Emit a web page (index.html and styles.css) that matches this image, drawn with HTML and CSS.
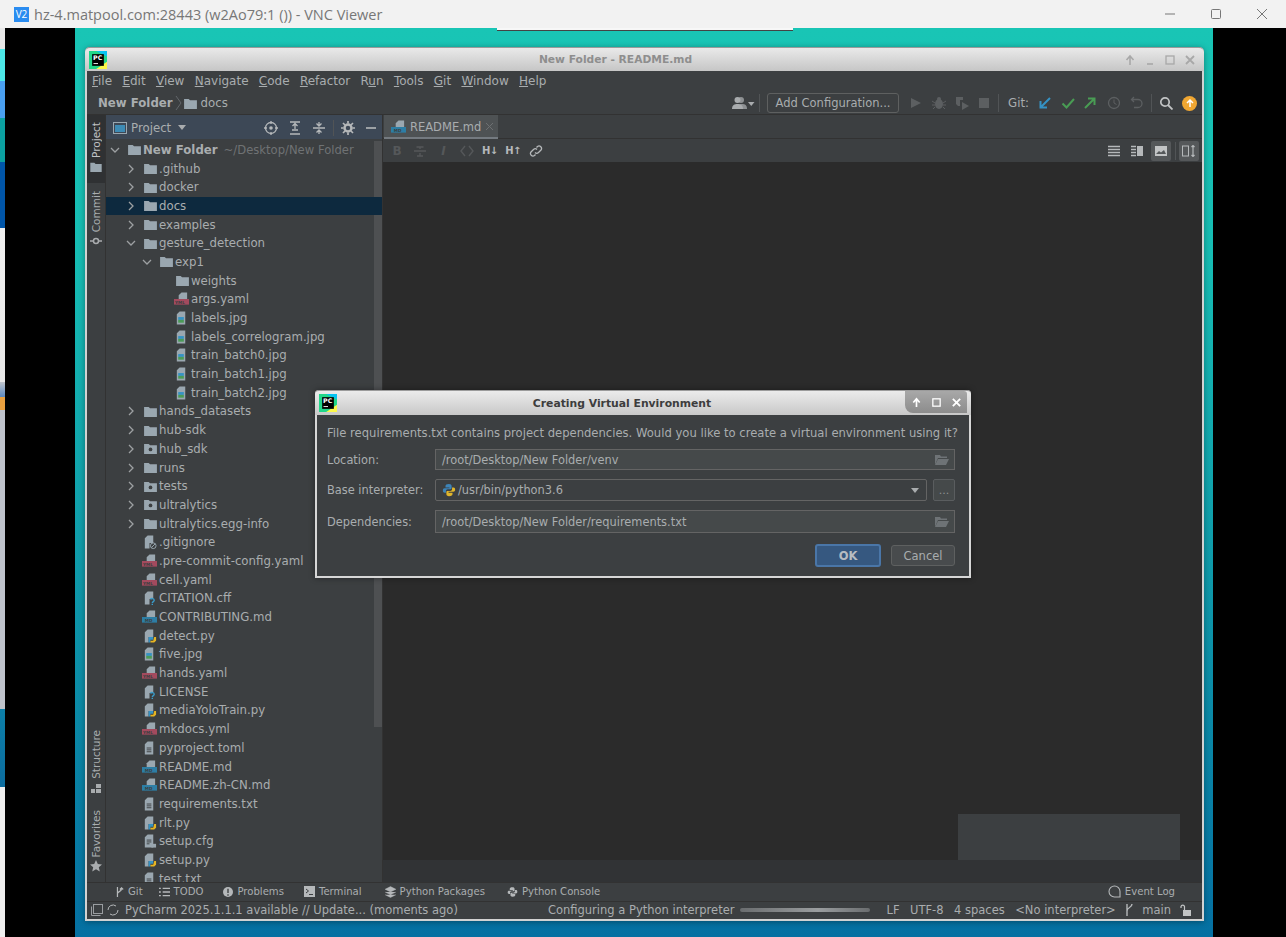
FILE: index.html
```html
<!DOCTYPE html>
<html lang="en">
<head>
    <meta charset="UTF-8">
    <title>hz-4.matpool.com:28443 (w2Ao79:1 ()) - VNC Viewer</title>
    <link rel="stylesheet" href="styles.css">
</head>
<body>
    <svg class="defs" width="0" height="0">
        <defs>
            <symbol id="folder" viewBox="0 0 14 12"><path d="M0 1h5l1.5 1.5H14V12H0z" fill="#9aa7b0"/></symbol>
            <symbol id="folder-dot" viewBox="0 0 14 12"><path d="M0 1h5l1.5 1.5H14V12H0z" fill="#9aa7b0"/><circle cx="7" cy="7" r="2" fill="#3c3f41"/></symbol>
            <symbol id="chev-r" viewBox="0 0 10 10"><path d="M3 1l4 4-4 4" fill="none" stroke="#9da0a2" stroke-width="1.3"/></symbol>
            <symbol id="chev-d" viewBox="0 0 10 10"><path d="M1 3l4 4 4-4" fill="none" stroke="#9da0a2" stroke-width="1.3"/></symbol>
            <symbol id="page" viewBox="0 0 16 16"><path d="M6 1h6v14H3V4z" fill="#9aa7b0"/><path d="M5 8h5M5 10h5M5 12h5" stroke="#3c3f41"/></symbol>
            <symbol id="yml" viewBox="0 0 16 16"><path d="M8 1h6v7H5V4z" fill="#9aa7b0"/><rect y="8" width="16" height="6" fill="#a34a5e"/><text x="1" y="13" class="badge-text">YML</text></symbol>
            <symbol id="md" viewBox="0 0 16 16"><path d="M8 1h6v7H5V4z" fill="#9aa7b0"/><rect y="8" width="16" height="6" fill="#2d7ea5"/><text x="3" y="13" class="badge-text">MD</text></symbol>
            <symbol id="jpg" viewBox="0 0 16 16"><path d="M6 1h6v14H3V4z" fill="#9aa7b0"/><rect x="4.5" y="7" width="6" height="3" fill="#3592c4"/><rect x="4.5" y="10" width="6" height="3" fill="#4b9a57"/></symbol>
            <symbol id="py" viewBox="0 0 16 16"><path d="M6 1h6v8H3V4zM3 9h4v6H3z" fill="#9aa7b0"/><path d="M7 9h5v3H9v3H7z" fill="#3592c4"/><path d="M13 9h2v4l-2 2h-4v-2h3z" fill="#e6b422"/></symbol>
            <symbol id="unknown" viewBox="0 0 16 16"><path d="M6 1h6v8H8v6H3V4z" fill="#9aa7b0"/><path d="M9 9.500c1-1.500 4-1 4 .8 0 1.500-2 1.500-2 3M11 14v1.500" fill="none" stroke="#3a9bc9" stroke-width="1.5"/></symbol>
            <symbol id="ignore" viewBox="0 0 16 16"><path d="M6 1h6v8H8v6H3V4z" fill="#9aa7b0"/><circle cx="12" cy="12" r="3" fill="none" stroke="#9aa7b0"/><path d="M10 14l4-4" stroke="#9aa7b0"/></symbol>
            <symbol id="cfg" viewBox="0 0 16 16"><path d="M6 1h6v14H3V4z" fill="#9aa7b0"/><path d="M5 7h5M5 9h5M5 11h3" stroke="#3c3f41"/><rect x="10" y="11" width="5" height="4" fill="#9aa7b0"/></symbol>
            <symbol id="python" viewBox="0 0 16 16"><path d="M8 1c-3 0-4 1-4 2.500V5h4.500v1H3C1.500 6 1 7 1 8.500S1.500 11 3 11h1.500V9c0-1 1-2 2-2h3c1 0 1.500-.5 1.500-1.500v-2C11 2 10 1 8 1z" fill="#3d84b8"/><path d="M8 15c3 0 4-1 4-2.500V11H7.500v-1H13c1.500 0 2-1 2-2.500S14.500 5 13 5h-1.500v2c0 1-1 2-2 2h-3C5.500 9 5 9.500 5 10.500v2C5 14 6 15 8 15z" fill="#e0b62c"/></symbol>
            <symbol id="pc" viewBox="0 0 20 20">
                <rect width="20" height="20" fill="#21d789"/><path d="M0 0h20v6L8 0z" fill="#07c3f2"/><path d="M20 20H8l12-8z" fill="#fcf84a"/>
                <rect x="3.5" y="3.5" width="13" height="13" fill="#000"/>
                <text x="4.5" y="10" class="pc-text">PC</text><rect x="5" y="13.5" width="5" height="1" fill="#fff"/>
            </symbol>
            <symbol id="open-folder" viewBox="0 0 14 12"><path d="M0 1h5l1 1.500h6V4H3L0 11z" fill="#6e7376"/><path d="M3 5h11l-3 6H0z" fill="#6e7376"/></symbol>
        </defs>
    </svg>

    <header class="vnc-title">
        <span class="vnc-logo">V2</span>
        <span class="vnc-name">hz-4.matpool.com:28443 (w2Ao79:1 ()) - VNC Viewer</span>
        <div class="vnc-controls">
            <svg width="12" height="12" viewBox="0 0 12 12"><path d="M1 6h10" stroke="#777"/></svg>
            <svg width="12" height="12" viewBox="0 0 12 12"><rect x="1.5" y="1.5" width="9" height="9" rx="1" fill="none" stroke="#777"/></svg>
            <svg width="12" height="12" viewBox="0 0 12 12"><path d="M1 1l10 10M11 1L1 11" stroke="#777"/></svg>
        </div>
    </header>

    <main class="viewport">
        <div class="behind-strip"></div>
        <div class="gutter-left"></div>
        <div class="desktop">
            <div class="ide">
                <div class="ide-title">
                    <svg class="pc-logo"><use href="#pc"/></svg>
                    <span class="ide-title-text">New Folder - README.md</span>
                    <div class="wm-buttons">
                        <svg width="12" height="12" viewBox="0 0 12 12"><path d="M6 11V3M2.5 6L6 2l3.5 4" fill="none" stroke="#a8a8a8" stroke-width="1.6"/></svg>
                        <svg width="12" height="12" viewBox="0 0 12 12"><path d="M3 10h6" stroke="#a8a8a8" stroke-width="1.6"/></svg>
                        <svg width="12" height="12" viewBox="0 0 12 12"><rect x="2" y="2" width="8" height="8" fill="none" stroke="#a8a8a8" stroke-width="1.3"/></svg>
                        <svg width="12" height="12" viewBox="0 0 12 12"><path d="M2 2l8 8M10 2l-8 8" stroke="#a8a8a8" stroke-width="1.8"/></svg>
                    </div>
                </div>

                <nav class="menu">
                    <span><u>F</u>ile</span><span><u>E</u>dit</span><span><u>V</u>iew</span><span><u>N</u>avigate</span><span><u>C</u>ode</span><span><u>R</u>efactor</span><span>R<u>u</u>n</span><span><u>T</u>ools</span><span><u>G</u>it</span><span><u>W</u>indow</span><span><u>H</u>elp</span>
                </nav>

                <div class="navbar">
                    <div class="crumbs">
                        <b>New Folder</b>
                        <svg class="crumb-sep" width="7" height="16" viewBox="0 0 7 16"><path d="M1 1l5 7-5 7" fill="none" stroke="#62666a"/></svg>
                        <svg class="i-folder"><use href="#folder"/></svg>
                        <span>docs</span>
                    </div>
                    <div class="run-tools">
                        <svg class="tool tool-user" width="24" height="14" viewBox="0 0 24 14"><circle cx="10" cy="4" r="3" fill="#8e9193"/><path d="M6 13c0-4 2-5 5-5s5 1 5 5z" fill="#8e9193"/><circle cx="6.500" cy="4" r="3" fill="#a9acae"/><path d="M1 13c0-4 2.500-5 5.500-5s5.500 1 5.500 5z" fill="#a9acae"/><path d="M17 6h6.500l-3.250 4z" fill="#a9acae"/></svg>
                        <span class="vsep"></span>
                        <button class="add-config">Add Configuration...</button>
                        <svg class="tool tool-play" width="12" height="12" viewBox="0 0 12 12"><path d="M1 1l10 5-10 5z" fill="#5c5f61"/></svg>
                        <svg class="tool tool-bug" width="14" height="14" viewBox="0 0 14 14"><ellipse cx="7" cy="8" rx="4" ry="5" fill="#5c5f61"/><circle cx="7" cy="3" r="2" fill="#5c5f61"/><path d="M0 5l3 2M14 5l-3 2M0 9h3M14 9h-3M1 13l2-2M13 13l-2-2" stroke="#5c5f61"/></svg>
                        <svg class="tool tool-cover" width="14" height="14" viewBox="0 0 14 14"><path d="M1 1h7v3H5v6H3L1 8z" fill="#5c5f61"/><path d="M7 6l7 4-7 4z" fill="#5c5f61"/></svg>
                        <svg class="tool tool-stop" width="12" height="12" viewBox="0 0 12 12"><rect x="1" y="1" width="10" height="10" fill="#5c5f61"/></svg>
                        <span class="vsep sep-git"></span>
                        <span class="git-label">Git:</span>
                        <svg class="tool tool-pull" width="14" height="14" viewBox="0 0 14 14"><path d="M12 2L3 11M2.500 5v6.500H9" fill="none" stroke="#3592c4" stroke-width="2"/></svg>
                        <svg class="tool tool-check" width="14" height="14" viewBox="0 0 14 14"><path d="M1.500 7.500L5.500 11.500 13 3" fill="none" stroke="#499c54" stroke-width="2"/></svg>
                        <svg class="tool tool-push" width="14" height="14" viewBox="0 0 14 14"><path d="M2 12L11 3M5 2.500h6.500V9" fill="none" stroke="#499c54" stroke-width="2"/></svg>
                        <svg class="tool tool-clock" width="14" height="14" viewBox="0 0 14 14"><circle cx="7" cy="7" r="5.500" fill="none" stroke="#5c5f61" stroke-width="1.3"/><path d="M7 3.500V7l2.500 1.500" fill="none" stroke="#5c5f61"/></svg>
                        <svg class="tool tool-undo" width="14" height="14" viewBox="0 0 14 14"><path d="M4 1L1.500 3.500 4 6M2 3.500h6a3.800 3.800 0 0 1 0 8H4" fill="none" stroke="#5c5f61" stroke-width="1.3"/></svg>
                        <span class="vsep sep-search"></span>
                        <svg class="tool tool-search" width="14" height="14" viewBox="0 0 14 14"><circle cx="6" cy="6" r="4.200" fill="none" stroke="#c2c4c5" stroke-width="1.7"/><path d="M9 9l4.500 4.500" stroke="#c2c4c5" stroke-width="1.8"/></svg>
                        <span class="update-dot"><svg width="10" height="10" viewBox="0 0 10 10"><path d="M5 9V3M2 5l3-3 3 3" fill="none" stroke="#fff" stroke-width="1.5"/></svg></span>
                    </div>
                </div>

                <div class="workspace">
                    <aside class="stripe">
                        <div class="stripe-tab active">
                            <svg width="12" height="10" viewBox="0 0 14 12"><use href="#folder"/></svg>
                            <span class="v-text">Project</span>
                        </div>
                        <div class="stripe-tab">
                            <svg width="12" height="12" viewBox="0 0 12 12"><circle cx="6" cy="6" r="2.500" fill="none" stroke="#a9acae" stroke-width="1.5"/><path d="M0 6h3M9 6h3" stroke="#a9acae" stroke-width="1.5"/></svg>
                            <span class="v-text">Commit</span>
                        </div>
                        <div class="stripe-bottom">
                            <div class="stripe-tab tab-structure">
                                <svg width="12" height="12" viewBox="0 0 12 12"><rect x="1" y="7" width="4" height="4" fill="#a9acae"/><rect x="6" y="2" width="5" height="4" fill="#a9acae"/><rect x="6" y="7" width="5" height="4" fill="#a9acae"/></svg>
                                <span class="v-text">Structure</span>
                            </div>
                            <div class="stripe-tab tab-favorites">
                                <svg width="12" height="12" viewBox="0 0 12 12"><path d="M6 0l1.800 4 4.200.4-3.200 2.800 1 4.300L6 9.300 2.200 11.500l1-4.300L0 4.400 4.200 4z" fill="#a9acae"/></svg>
                                <span class="v-text">Favorites</span>
                            </div>
                        </div>
                    </aside>

                    <section class="project">
                        <div class="project-head">
                            <svg class="i-window" width="14" height="12" viewBox="0 0 14 12"><rect x=".5" y=".5" width="13" height="11" fill="none" stroke="#9aa7b0"/><rect x="2" y="3" width="10" height="7" fill="#3d8bb5"/></svg>
                            <span class="project-title">Project</span>
                            <svg class="head-caret" width="8" height="5" viewBox="0 0 8 5"><path d="M0 0h8L4 5z" fill="#a9acae"/></svg>
                            <div class="head-tools">
                                <svg width="14" height="14" viewBox="0 0 14 14"><circle cx="7" cy="7" r="5.500" fill="none" stroke="#b5b8ba" stroke-width="1.3"/><circle cx="7" cy="7" r="1.800" fill="#b5b8ba"/><path d="M7 0v3M7 11v3M0 7h3M11 7h3" stroke="#b5b8ba" stroke-width="1.3"/></svg>
                                <svg width="14" height="14" viewBox="0 0 14 14"><path d="M2 1h10M2 13h10M4 9h6M7 3v5M4.500 5L7 2.500 9.500 5" fill="none" stroke="#b5b8ba" stroke-width="1.3"/></svg>
                                <svg width="14" height="14" viewBox="0 0 14 14"><path d="M1 7h12M7 1v3.500M7 9.500V13M4.500 2.500L7 5l2.500-2.500M4.500 11.500L7 9l2.500 2.500" fill="none" stroke="#b5b8ba" stroke-width="1.3"/></svg>
                                <span class="vsep head-sep"></span>
                                <svg width="14" height="14" viewBox="0 0 14 14"><circle cx="7" cy="7" r="3.500" fill="none" stroke="#b5b8ba" stroke-width="2.5"/><path d="M7 0v2.500M7 11.500V14M0 7h2.500M11.500 7H14M2 2l2 2M10 10l2 2M12 2l-2 2M4 10l-2 2" stroke="#b5b8ba" stroke-width="1.7"/></svg>
                                <svg width="12" height="14" viewBox="0 0 12 14"><path d="M1 7h10" stroke="#b5b8ba" stroke-width="1.6"/></svg>
                            </div>
                        </div>
                        <div class="tree">
                            <div class="scrollbar"></div>
                            <div class="row d0"><svg class="chev"><use href="#chev-d"/></svg><svg class="ico"><use href="#folder"/></svg><b>New Folder</b><span class="path">~/Desktop/New Folder</span></div>
                            <div class="row d1"><svg class="chev"><use href="#chev-r"/></svg><svg class="ico"><use href="#folder"/></svg>.github</div>
                            <div class="row d1"><svg class="chev"><use href="#chev-r"/></svg><svg class="ico"><use href="#folder"/></svg>docker</div>
                            <div class="row d1 selected"><svg class="chev"><use href="#chev-r"/></svg><svg class="ico"><use href="#folder"/></svg>docs</div>
                            <div class="row d1"><svg class="chev"><use href="#chev-r"/></svg><svg class="ico"><use href="#folder"/></svg>examples</div>
                            <div class="row d1"><svg class="chev"><use href="#chev-d"/></svg><svg class="ico"><use href="#folder"/></svg>gesture_detection</div>
                            <div class="row d2"><svg class="chev"><use href="#chev-d"/></svg><svg class="ico"><use href="#folder"/></svg>exp1</div>
                            <div class="row d3"><span class="chev"></span><svg class="ico"><use href="#folder"/></svg>weights</div>
                            <div class="row d3"><span class="chev"></span><svg class="ico file"><use href="#yml"/></svg>args.yaml</div>
                            <div class="row d3"><span class="chev"></span><svg class="ico file"><use href="#jpg"/></svg>labels.jpg</div>
                            <div class="row d3"><span class="chev"></span><svg class="ico file"><use href="#jpg"/></svg>labels_correlogram.jpg</div>
                            <div class="row d3"><span class="chev"></span><svg class="ico file"><use href="#jpg"/></svg>train_batch0.jpg</div>
                            <div class="row d3"><span class="chev"></span><svg class="ico file"><use href="#jpg"/></svg>train_batch1.jpg</div>
                            <div class="row d3"><span class="chev"></span><svg class="ico file"><use href="#jpg"/></svg>train_batch2.jpg</div>
                            <div class="row d1"><svg class="chev"><use href="#chev-r"/></svg><svg class="ico"><use href="#folder"/></svg>hands_datasets</div>
                            <div class="row d1"><svg class="chev"><use href="#chev-r"/></svg><svg class="ico"><use href="#folder"/></svg>hub-sdk</div>
                            <div class="row d1"><svg class="chev"><use href="#chev-r"/></svg><svg class="ico"><use href="#folder-dot"/></svg>hub_sdk</div>
                            <div class="row d1"><svg class="chev"><use href="#chev-r"/></svg><svg class="ico"><use href="#folder"/></svg>runs</div>
                            <div class="row d1"><svg class="chev"><use href="#chev-r"/></svg><svg class="ico"><use href="#folder-dot"/></svg>tests</div>
                            <div class="row d1"><svg class="chev"><use href="#chev-r"/></svg><svg class="ico"><use href="#folder-dot"/></svg>ultralytics</div>
                            <div class="row d1"><svg class="chev"><use href="#chev-r"/></svg><svg class="ico"><use href="#folder"/></svg>ultralytics.egg-info</div>
                            <div class="row d1"><span class="chev"></span><svg class="ico file"><use href="#ignore"/></svg>.gitignore</div>
                            <div class="row d1"><span class="chev"></span><svg class="ico file"><use href="#yml"/></svg>.pre-commit-config.yaml</div>
                            <div class="row d1"><span class="chev"></span><svg class="ico file"><use href="#yml"/></svg>cell.yaml</div>
                            <div class="row d1"><span class="chev"></span><svg class="ico file"><use href="#unknown"/></svg>CITATION.cff</div>
                            <div class="row d1"><span class="chev"></span><svg class="ico file"><use href="#md"/></svg>CONTRIBUTING.md</div>
                            <div class="row d1"><span class="chev"></span><svg class="ico file"><use href="#py"/></svg>detect.py</div>
                            <div class="row d1"><span class="chev"></span><svg class="ico file"><use href="#jpg"/></svg>five.jpg</div>
                            <div class="row d1"><span class="chev"></span><svg class="ico file"><use href="#yml"/></svg>hands.yaml</div>
                            <div class="row d1"><span class="chev"></span><svg class="ico file"><use href="#unknown"/></svg>LICENSE</div>
                            <div class="row d1"><span class="chev"></span><svg class="ico file"><use href="#py"/></svg>mediaYoloTrain.py</div>
                            <div class="row d1"><span class="chev"></span><svg class="ico file"><use href="#yml"/></svg>mkdocs.yml</div>
                            <div class="row d1"><span class="chev"></span><svg class="ico file"><use href="#page"/></svg>pyproject.toml</div>
                            <div class="row d1"><span class="chev"></span><svg class="ico file"><use href="#md"/></svg>README.md</div>
                            <div class="row d1"><span class="chev"></span><svg class="ico file"><use href="#md"/></svg>README.zh-CN.md</div>
                            <div class="row d1"><span class="chev"></span><svg class="ico file"><use href="#page"/></svg>requirements.txt</div>
                            <div class="row d1"><span class="chev"></span><svg class="ico file"><use href="#py"/></svg>rlt.py</div>
                            <div class="row d1"><span class="chev"></span><svg class="ico file"><use href="#cfg"/></svg>setup.cfg</div>
                            <div class="row d1"><span class="chev"></span><svg class="ico file"><use href="#py"/></svg>setup.py</div>
                            <div class="row d1"><span class="chev"></span><svg class="ico file"><use href="#page"/></svg>test.txt</div>
                        </div>
                    </section>

                    <section class="editor">
                        <div class="tabs">
                            <div class="tab">
                                <svg class="ico-tab"><use href="#md"/></svg>
                                <span>README.md</span>
                                <svg width="9" height="9" viewBox="0 0 9 9"><path d="M1 1l7 7M8 1L1 8" stroke="#6d7072"/></svg>
                            </div>
                        </div>
                        <div class="md-bar">
                            <span class="md-btn md-off md-bold">B</span>
                            <svg class="md-icon" width="14" height="14" viewBox="0 0 14 14"><path d="M1 7h12M3.500 3h7M7 3v2M7 9v3M4 12h6" fill="none" stroke="#55585a" stroke-width="1.4"/></svg>
                            <span class="md-btn md-off md-ital">I</span>
                            <svg class="md-icon" width="14" height="14" viewBox="0 0 14 14"><path d="M5 2L1 7l4 5M9 2l4 5-4 5" fill="none" stroke="#55585a" stroke-width="1.4"/></svg>
                            <span class="md-btn md-h">H↓</span>
                            <span class="md-btn md-h">H↑</span>
                            <svg class="md-icon" width="14" height="14" viewBox="0 0 14 14"><path d="M6 8.500a2.500 2.500 0 0 0 3.500 0l2.500-2.500a2.500 2.500 0 0 0-3.500-3.500L7.500 3.500M8 5.500a2.500 2.500 0 0 0-3.500 0L2 8a2.500 2.500 0 0 0 3.500 3.500l1-1" fill="none" stroke="#b5b8ba" stroke-width="1.3"/></svg>
                            <div class="md-view">
                                <svg width="12" height="12" viewBox="0 0 12 12"><path d="M0 1.500h12M0 4.500h12M0 7.500h12M0 10.500h12" stroke="#b5b8ba" stroke-width="1.3"/></svg>
                                <svg width="12" height="12" viewBox="0 0 12 12"><path d="M0 1.500h5M0 4.500h5M0 7.500h5M0 10.500h5" stroke="#b5b8ba" stroke-width="1.3"/><rect x="6" y="1" width="6" height="10" fill="#b5b8ba"/></svg>
                                <span class="view-on view-img"><svg width="12" height="10" viewBox="0 0 12 10"><rect width="12" height="10" fill="#c2c4c5"/><path d="M1 8l3-3 2 1.500L9 4l2 4z" fill="#55585a"/></svg></span>
                                <span class="vsep view-sep"></span>
                                <span class="view-on"><svg width="14" height="12" viewBox="0 0 14 12"><rect x=".5" y="1" width="6" height="10" fill="none" stroke="#b5b8ba"/><path d="M11 0v12M9.500 2L11 .5 12.500 2M9.500 10l1.500 1.500 1.500-1.500" fill="none" stroke="#b5b8ba" stroke-width="1.2"/></svg></span>
                            </div>
                        </div>
                        <div class="editor-body">
                            <div class="ghost-box"></div>
                        </div>
                        <div class="editor-foot"></div>
                    </section>
                </div>

                <div class="tool-bar">
                    <span class="tw tw-git"><svg width="9" height="12" viewBox="0 0 11 12"><path d="M3 0v12M3 8c0-3 5-2 5-6M6 3l2-2 2 2" fill="none" stroke="#b5b8ba" stroke-width="1.5"/></svg>Git</span>
                    <span class="tw tw-todo"><svg width="11" height="10" viewBox="0 0 12 10"><path d="M0 1h2M4 1h8M0 5h2M4 5h8M0 9h2M4 9h8" stroke="#b5b8ba" stroke-width="1.4"/></svg>TODO</span>
                    <span class="tw tw-problems"><svg width="10" height="10" viewBox="0 0 11 11"><circle cx="5.500" cy="5.500" r="5.500" fill="#b5b8ba"/><path d="M5.500 2v4.500M5.500 8v1.500" stroke="#3c3f41" stroke-width="1.5"/></svg>Problems</span>
                    <span class="tw tw-terminal"><svg width="11" height="11" viewBox="0 0 11 11"><rect width="11" height="11" fill="#b5b8ba"/><path d="M2 3l2.500 2L2 7M5 8.500h4" fill="none" stroke="#3c3f41"/></svg>Terminal</span>
                    <span class="tw tw-packages"><svg width="11" height="12" viewBox="0 0 12 12"><path d="M6 0l6 3-6 3-6-3zM0 6l6 3 6-3M0 9l6 3 6-3" fill="#b5b8ba" stroke="#b5b8ba" stroke-width=".4"/></svg>Python Packages</span>
                    <span class="tw tw-console"><svg width="11" height="12" viewBox="0 0 16 16"><path d="M8 1c-3 0-4 1-4 2.500V5h4.500v1H3C1.500 6 1 7 1 8.500S1.500 11 3 11h1.500V9c0-1 1-2 2-2h3c1 0 1.500-.5 1.500-1.500v-2C11 2 10 1 8 1zM8 15c3 0 4-1 4-2.500V11H7.500v-1H13c1.500 0 2-1 2-2.500S14.500 5 13 5h-1.500v2c0 1-1 2-2 2h-3C5.500 9 5 9.500 5 10.500v2C5 14 6 15 8 15z" fill="#b5b8ba"/></svg>Python Console</span>
                    <span class="tw tw-log"><svg width="13" height="13" viewBox="0 0 13 13"><path d="M12 12H6.500a5.500 5.500 0 1 1 5.500-5.500z" fill="none" stroke="#b5b8ba" stroke-width="1.1"/></svg>Event Log</span>
                </div>

                <footer class="status">
                    <svg class="st-box" width="12" height="12" viewBox="0 0 12 12"><rect x="2.500" y=".5" width="9" height="9" fill="none" stroke="#9a9da0"/><path d="M.5 2.500v9h9" fill="none" stroke="#9a9da0"/></svg>
                    <svg class="st-spin" width="12" height="12" viewBox="0 0 12 12"><path d="M1 6a5 5 0 0 1 8-4M11 6a5 5 0 0 1-8 4" fill="none" stroke="#b5b8ba"/></svg>
                    <span>PyCharm 2025.1.1.1 available // Update... (moments ago)</span>
                    <span class="st-task">Configuring a Python interpreter</span>
                    <span class="progress"></span>
                    <span class="st-lf">LF</span>
                    <span class="st-item">UTF-8</span>
                    <span class="st-item">4 spaces</span>
                    <span class="st-item">&lt;No interpreter&gt;</span>
                    <span class="st-branch"><svg width="9" height="14" viewBox="0 0 9 14"><path d="M3 1v12M8 1c0 4-5 3-5 7" fill="none" stroke="#b5b8ba" stroke-width="1.4"/></svg>main</span>
                    <svg class="st-lock" width="11" height="12" viewBox="0 0 11 12"><rect x="3" y="6" width="8" height="6" fill="#c2c4c5"/><path d="M1 4V2.500a1.800 1.800 0 0 1 3.500 0V6" fill="none" stroke="#c2c4c5" stroke-width="1.2"/></svg>
                </footer>
            </div>

            <div class="dialog">
                <div class="dialog-title">
                    <svg class="pc-logo"><use href="#pc"/></svg>
                    <span class="dialog-title-text">Creating Virtual Environment</span>
                    <div class="dialog-wm">
                        <svg width="11" height="11" viewBox="0 0 12 12"><path d="M6 11V3M2.500 6L6 2l3.500 4" fill="none" stroke="#fff" stroke-width="1.8"/></svg>
                        <svg width="11" height="11" viewBox="0 0 12 12"><rect x="2" y="2" width="8" height="8" fill="none" stroke="#fff" stroke-width="1.4"/></svg>
                        <svg width="11" height="11" viewBox="0 0 12 12"><path d="M2 2l8 8M10 2l-8 8" stroke="#fff" stroke-width="2"/></svg>
                    </div>
                </div>
                <div class="dialog-body">
                    <p class="dialog-msg">File requirements.txt contains project dependencies. Would you like to create a virtual environment using it?</p>
                    <div class="form">
                        <label>Location:</label>
                        <div class="field field-location"><span>/root/Desktop/New Folder/venv</span><svg width="14" height="12"><use href="#open-folder"/></svg></div>
                        <label>Base interpreter:</label>
                        <div class="combo-row">
                            <div class="field combo"><svg class="py-ico" width="14" height="14"><use href="#python"/></svg><span>/usr/bin/python3.6</span><svg class="combo-caret" width="8" height="5" viewBox="0 0 8 5"><path d="M0 0h8L4 5z" fill="#a9acae"/></svg></div>
                            <button class="dots">...</button>
                        </div>
                        <label>Dependencies:</label>
                        <div class="field field-deps"><span>/root/Desktop/New Folder/requirements.txt</span><svg width="14" height="12"><use href="#open-folder"/></svg></div>
                    </div>
                    <div class="dialog-actions">
                        <button class="btn btn-ok">OK</button>
                        <button class="btn">Cancel</button>
                    </div>
                </div>
            </div>
        </div>
        <div class="gutter-right"></div>
    </main>
    <div class="sliver"></div>
</body>
</html>
```

FILE: styles.css
```css
* {
    box-sizing: border-box;
}

html, body {
    margin: 0;
    height: 937px;
    overflow: hidden;
}

body {
    background: #000;
    font-family: "DejaVu Sans", sans-serif;
    font-size: 11.75px;
    color: #a9adaf;
}

.defs {
    position: absolute;
}

.pc-text {
    font: bold 7px "DejaVu Sans", sans-serif;
    fill: #fff;
}

.badge-text {
    font: bold 4.5px "DejaVu Sans", sans-serif;
    fill: #3c3f41;
}

/* vnc viewer chrome */
.vnc-title {
    height: 28px;
    background: #f2f2f2;
    display: flex;
    align-items: center;
    padding-left: 14px;
    font-family: "Open Sans", sans-serif;
    font-size: 14px;
    color: #777;
}

.vnc-logo {
    width: 15px;
    height: 15px;
    background: #2a8cf0;
    color: #fff;
    font-size: 10px;
    line-height: 15px;
    text-align: center;
    margin-right: 5px;
}

.vnc-name {
    font-size: 14.5px;
}

.vnc-controls {
    margin-left: auto;
    display: flex;
    gap: 34px;
    padding-right: 18px;
}

.viewport {
    display: flex;
    height: 909px;
}

.behind-strip {
    width: 5px;
    background: linear-gradient(#e8e8e8 0, #e8e8e8 21px, #4de8e8 21px, #4de8e8 53px, #4a9ff0 53px, #4a9ff0 90px, #0ba0a0 90px, #0ba0a0 134px, #0055a8 134px, #0055a8 200px, #f0f0f0 200px, #e8e8e8 354px, #c0c4cc 354px, #5a88c0 369px, #e8a040 369px, #e8a040 382px, #bfc3cb 382px, #bfc3cb 681px, #0c7fa8 681px, #0c6c9e 759px, #efefef 759px);
}

.gutter-left {
    width: 70px;
}

.gutter-right {
    width: 73px;
}

.desktop {
    position: relative;
    width: 1138px;
    background: linear-gradient(#19c5b5 0, #17bdb4 25%, #0f9aaa 60%, #0570a2 100%);
    padding: 19px 0 0 10px;
}

.sliver {
    position: absolute;
    left: 497px;
    top: 28px;
    width: 296px;
    height: 3px;
    background: #f7f7f7;
    border-bottom: 1px solid #444;
}

/* ide window */
.ide {
    width: 1119px;
    height: 874px;
    background: #3c3f41;
    border: 2px solid #d2d2d2;
    border-top: 0;
    border-radius: 5px 5px 0 0;
    display: flex;
    flex-direction: column;
    box-shadow: 0 1px 6px rgba(0, 0, 0, .35);
}

.ide-title {
    height: 24px;
    flex: none;
    margin: 0 -2px;
    background: linear-gradient(#e9e9e9, #c6c6c6);
    border-top: 1px solid #9b9b9b;
    border-radius: 5px 5px 0 0;
    display: flex;
    align-items: center;
    position: relative;
    padding-left: 4px;
}

.pc-logo {
    width: 18px;
    height: 18px;
}

.ide-title-text {
    position: absolute;
    left: 0;
    right: 58px;
    text-align: center;
    font-size: 10.7px;
    font-weight: bold;
    color: #8e8e8e;
}

.wm-buttons {
    margin-left: auto;
    display: flex;
    gap: 8px;
    padding-right: 8px;
}

.menu {
    height: 21px;
    flex: none;
    display: flex;
    align-items: center;
    gap: 10.3px;
    padding-left: 5px;
    font-size: 12px;
    padding-bottom: 1px;
}

.navbar {
    height: 23px;
    flex: none;
    display: flex;
    align-items: center;
    padding-left: 11px;
    padding-right: 5px;
    border-bottom: 1px solid #323232;
}

.crumbs {
    display: flex;
    align-items: center;
}

.crumb-sep {
    margin: 0 2px;
}

.i-folder {
    width: 13px;
    height: 11px;
    margin-right: 4px;
}

.run-tools {
    margin-left: auto;
    display: flex;
    align-items: center;
}

.vsep {
    display: block;
    width: 1px;
    height: 18px;
    background: #515456;
    flex: none;
}

.tool-user {
    margin-right: 4px;
}

.add-config {
    height: 20px;
    width: 132px;
    margin-left: 7px;
    margin-right: 11px;
    background: #3c3f41;
    border: 1px solid #5e6060;
    border-radius: 3px;
    color: #a9adaf;
    font: 11.5px "DejaVu Sans", sans-serif;
    padding: 0;
}

.tool-play { margin-right: 10px; }
.tool-bug { margin-right: 9px; }
.tool-cover { margin-right: 9px; }
.tool-stop { margin-right: 8px; }
.sep-git { margin-right: 9px; }
.git-label { margin-right: 9px; }
.tool-pull { margin-right: 9px; }
.tool-check { margin-right: 8px; }
.tool-push { margin-right: 10px; }
.tool-clock { margin-right: 9px; }
.tool-undo { margin-right: 7px; }
.sep-search { margin-right: 7px; }
.tool-search { margin-right: 9px; }

.update-dot {
    width: 15px;
    height: 15px;
    border-radius: 50%;
    background: #f0a732;
    display: flex;
    align-items: center;
    justify-content: center;
}

.workspace {
    flex: 1;
    display: flex;
    min-height: 0;
}

/* left stripe */
.stripe {
    width: 19px;
    flex: none;
    display: flex;
    flex-direction: column;
    border-right: 1px solid #323232;
}

.stripe-tab {
    display: flex;
    flex-direction: column-reverse;
    align-items: center;
    gap: 3px;
    padding: 8px 0;
    font-size: 10.5px;
}

.stripe-tab svg {
    flex: none;
}

.stripe-tab.active {
    background: #2f3133;
    color: #c0c3c5;
    height: 68px;
    padding: 0 0 11px;
    gap: 4px;
}

.v-text {
    writing-mode: vertical-rl;
    transform: rotate(180deg);
}

.stripe-bottom {
    margin-top: auto;
}

.tab-structure {
    padding: 0 0 9px;
}

.tab-favorites {
    padding: 7px 0 10px;
}

/* project tree */
.project {
    width: 277px;
    flex: none;
    display: flex;
    flex-direction: column;
    border-right: 1px solid #323232;
}

.project-head {
    height: 24px;
    flex: none;
    background: #3d4856;
    display: flex;
    align-items: center;
    padding: 1px 0 0 7px;
}

.project-title {
    margin-left: 4px;
}

.head-caret {
    margin-left: 7px;
}

.head-tools {
    margin-left: auto;
    display: flex;
    align-items: center;
    gap: 10px;
    padding-right: 5px;
}

.head-sep {
    height: 16px;
    margin: 0 -3px;
}

.tree {
    flex: 1;
    position: relative;
    overflow: hidden;
    padding-top: 1.5px;
    min-height: 0;
}

.scrollbar {
    position: absolute;
    right: 0;
    top: 2px;
    width: 8px;
    height: 586px;
    background: #4e5052;
}

.row {
    height: 18.7px;
    display: flex;
    align-items: center;
    white-space: nowrap;
    position: relative;
}

.row.selected {
    background: #0d293e;
}

.d0 { padding-left: 1px; }
.d1 { padding-left: 17px; }
.d2 { padding-left: 33px; }
.d3 { padding-left: 49px; }

.chev {
    width: 16px;
    height: 10px;
    flex: none;
}

.ico {
    width: 20px;
    height: 11px;
    flex: none;
    padding: 0 2px 0 5px;
}

.ico.file {
    height: 16px;
    padding: 0 2px 0 3px;
}

.path {
    margin-left: 6px;
    color: #6f7274;
    font-size: 11.6px;
}

/* editor side */
.editor {
    flex: 1;
    display: flex;
    flex-direction: column;
    min-width: 0;
}

.tabs {
    height: 24px;
    flex: none;
    display: flex;
    border-bottom: 1px solid #323232;
}

.tab {
    width: 114px;
    margin-left: 1px;
    background: #4e5254;
    border-bottom: 2px solid #747a80;
    height: 24px;
    display: flex;
    align-items: center;
    gap: 4px;
    padding: 1px 0 0 7px;
    font-size: 11.5px;
}

.ico-tab {
    width: 15px;
    height: 16px;
}

.md-bar {
    height: 23px;
    flex: none;
    display: flex;
    align-items: center;
    padding-left: 2.5px;
}

.md-btn {
    width: 23.2px;
    text-align: center;
    font-size: 12px;
    font-weight: bold;
}

.md-off {
    color: #55585a;
}

.md-ital {
    font-style: italic;
}

.md-h {
    color: #b5b8ba;
    font-size: 10px;
    white-space: nowrap;
    letter-spacing: -.5px;
}

.md-icon {
    margin: 0 4.6px;
}

.md-view {
    margin-left: auto;
    display: flex;
    align-items: center;
    gap: 11px;
    padding-right: 3px;
}

.view-on {
    width: 20px;
    height: 20px;
    background: #55585a;
    border-radius: 2px;
    display: flex;
    align-items: center;
    justify-content: center;
}

.view-img {
    margin-left: -3px;
}

.view-sep {
    margin: 0 -8px 0 -7px;
    height: 18px;
}

.editor-body {
    flex: 1;
    background: #2b2b2b;
    position: relative;
    min-height: 0;
}

.ghost-box {
    position: absolute;
    right: 22px;
    bottom: 0;
    width: 222px;
    height: 46px;
    background: #3c3f41;
}

.editor-foot {
    height: 22px;
    flex: none;
    background: #313335;
}

/* bottom bars */
.tool-bar {
    height: 19px;
    flex: none;
    display: flex;
    align-items: center;
    font-size: 10.1px;
    border-top: 1px solid #323232;
    padding: 0 0 1px 28px;
}

.tw {
    display: flex;
    align-items: center;
    gap: 4px;
}

.tw-todo { margin-left: 16px; }
.tw-problems { margin-left: 20px; }
.tw-terminal { margin-left: 20px; }
.tw-packages { margin-left: 23px; }
.tw-console { margin-left: 22px; }
.tw-log { margin-left: auto; margin-right: 27px; }

.status {
    height: 18px;
    flex: none;
    display: flex;
    align-items: center;
    border-top: 1px solid #323232;
    padding: 0 0 1px 4px;
    font-size: 11.5px;
}

.st-box {
    margin-right: 4px;
}

.st-spin {
    margin-right: 6px;
}

.st-task {
    margin-left: auto;
}

.progress {
    width: 130px;
    height: 4px;
    border-radius: 2px;
    background: linear-gradient(90deg, #6a6d6f, #9a9d9f 60%, #6a6d6f);
    margin: 0 16px 0 6px;
}

.st-item {
    margin-left: 10.5px;
}

.st-branch {
    display: flex;
    align-items: center;
    gap: 9px;
    margin-left: 8.5px;
}

.st-lock {
    margin: 0 11px 0 9px;
}

/* dialog */
.dialog {
    position: absolute;
    left: 240px;
    top: 362px;
    width: 656px;
    height: 188px;
    background: #3c3f41;
    border: 2px solid #d6d6d6;
    border-top: 0;
    border-radius: 4px 4px 0 0;
    box-shadow: 0 0 6px rgba(0, 0, 0, .4);
}

.dialog-title {
    height: 25px;
    margin: 0 -2px;
    background: linear-gradient(#ebebeb, #c8c8c8);
    border-top: 1px solid #9b9b9b;
    border-radius: 4px 4px 0 0;
    display: flex;
    align-items: center;
    position: relative;
    padding-left: 4px;
}

.dialog-title-text {
    position: absolute;
    left: 0;
    right: 42px;
    text-align: center;
    font-size: 10.8px;
    font-weight: bold;
    color: #3d3d3d;
}

.dialog-wm {
    position: absolute;
    right: 4px;
    top: 0;
    width: 62px;
    height: 22px;
    background: linear-gradient(#a8a8a8, #8c8c8c);
    border-radius: 0 3px 0 8px;
    display: flex;
    align-items: center;
    justify-content: center;
    gap: 9px;
}

.dialog-body {
    padding: 10px 14px 0 10px;
}

.dialog-msg {
    margin: 0 0 8px;
    font-size: 11.6px;
    white-space: nowrap;
    line-height: 16px;
}

.form {
    display: grid;
    grid-template-columns: 108px 1fr;
    align-items: center;
    row-gap: 9px;
    font-size: 11.4px;
}

.field {
    height: 22px;
    background: #45494a;
    border: 1px solid #646464;
    display: flex;
    align-items: center;
    padding: 0 5px 0 6px;
    justify-content: space-between;
}

.field-location {
    height: 21px;
}

.field-deps {
    height: 23px;
}

.combo-row {
    display: flex;
    gap: 6px;
    height: 22px;
}

.combo {
    flex: 1;
    justify-content: flex-start;
    background: #3c3f41;
    border-radius: 2px;
    padding-right: 7px;
}

.py-ico {
    margin-right: 2px;
}

.combo-caret {
    margin-left: auto;
}

.dots {
    width: 22px;
    background: #45494a;
    border: 1px solid #5a5d5f;
    border-radius: 2px;
    color: #8e9193;
    font: 11px "DejaVu Sans", sans-serif;
    padding: 0;
}

.dialog-actions {
    display: flex;
    justify-content: flex-end;
    align-items: center;
    gap: 10px;
    margin-top: 11px;
}

.btn {
    width: 64px;
    height: 21px;
    background: #484b4d;
    border: 1px solid #5e6060;
    border-radius: 3px;
    color: #a9adaf;
    font: 11.5px "DejaVu Sans", sans-serif;
    padding: 0;
}

.btn-ok {
    width: 66px;
    height: 23px;
    background: #365880;
    border: 2px solid #4a76a8;
    font-weight: bold;
    color: #b6bcc2;
}
```
